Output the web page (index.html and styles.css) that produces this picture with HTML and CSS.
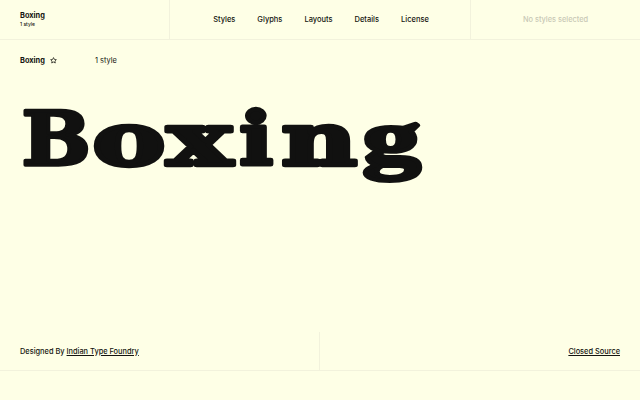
FILE: index.html
```html
<!DOCTYPE html>
<html lang="en">
<head>
<meta charset="utf-8">
<title>Boxing</title>
<link rel="stylesheet" href="styles.css">
</head>
<body>
<div class="page">
  <header class="topbar">
    <div class="brand">
      <div class="brand-name">Boxing</div>
      <div class="brand-sub">1 style</div>
    </div>
    <nav class="nav">
      <a>Styles</a><a>Glyphs</a><a>Layouts</a><a>Details</a><a>License</a>
    </nav>
    <div class="selection">No styles selected</div>
  </header>
  <main class="main">
    <div class="meta">
      <div class="meta-name">
        <strong>Boxing</strong>
        <svg class="star" viewBox="0 0 12 12" width="7" height="7"><path d="M6 1l1.500 3.200 3.400.4-2.500 2.300.7 3.400L6 8.600l-3.100 1.700.7-3.400L1.100 4.600l3.400-.4z" fill="none" stroke="#1a1a14" stroke-width="1.300" stroke-linejoin="round"/></svg>
      </div>
      <div class="meta-count">1 style</div>
    </div>
    <h1 class="specimen">
      <svg class="specimen-art" viewBox="0 0 440 120" width="440" height="120" role="img"><text class="glyph" transform="translate(21.500 84) scale(1.08 .98)">B</text><text class="glyph heavy" transform="translate(92.500 84) scale(1.44 .97)">o</text><text class="glyph heavy" transform="translate(167 84) scale(1.44 .97)">x</text><text class="glyph heavy" transform="translate(239.500 84) scale(1.16 .97)">i</text><text class="glyph heavy" transform="translate(281.500 84) scale(1.37 .97)">n</text><text class="glyph alt" transform="translate(362.500 83) scale(1.45 .98)">g</text></svg>
    </h1>
  </main>
  <footer class="footer">
    <div class="credit">Designed By <a>Indian Type Foundry</a></div>
    <div class="licence"><a>Closed Source</a></div>
  </footer>
  <div class="tail"></div>
</div>
</body>
</html>
```
FILE: styles.css
```css
* { box-sizing: border-box; }
html, body { margin: 0; height: 100%; }
body {
  background: #feffe6;
  color: #14140f;
  font-family: Inter, "Liberation Sans", sans-serif;
  font-size: 7.4px;
  font-weight: 500;
  overflow: hidden;
}
.page { height: 400px; display: flex; flex-direction: column; }
.topbar {
  height: 40px;
  display: grid;
  grid-template-columns: 170px 1fr 170px;
  border-bottom: 1px solid #f2f2dc;
}
.brand {
  padding-left: 20px;
  border-right: 1px solid #f2f2dc;
  display: flex;
  flex-direction: column;
  justify-content: center;
}
.brand-name { font-weight: 700; line-height: 10px; }
.brand-sub { font-size: 5px; line-height: 7px; }
.nav { display: flex; justify-content: center; align-items: center; gap: 22px; padding-left: 2px; font-size: 7.5px; }
.selection {
  border-left: 1px solid #f2f2dc;
  display: flex;
  align-items: center;
  justify-content: center;
  color: #c9c9b6;
}
.main { flex: 1; padding: 0 20px; }
.meta { display: flex; height: 41px; align-items: center; }
.meta-name { width: 75px; display: flex; align-items: center; gap: 5px; }
.meta-name strong { font-weight: 700; }
.meta-count { font-weight: 400; }
.star { display: block; }
.specimen { margin: 0; font-size: inherit; }
.specimen-art { display: block; margin-left: -20px; overflow: visible; }
.glyph {
  font-family: "DejaVu Serif", serif;
  font-weight: 700;
  font-size: 76px;
  fill: #111110;
  stroke: #111110;
  stroke-width: 3.5px;
  stroke-linejoin: round;
}
.glyph.heavy { stroke-width: 4.5px; }
.glyph.alt { font-family: "Liberation Serif", serif; font-size: 80px; stroke-width: 4px; }
.footer {
  height: 39px;
  display: grid;
  grid-template-columns: 1fr 1fr;
  border-bottom: 1px solid #f2f2dc;
}
.credit { padding-left: 20px; display: flex; align-items: center; gap: 2px; border-right: 1px solid #f2f2dc; }
.licence { padding-right: 20px; display: flex; align-items: center; justify-content: flex-end; }
.footer a { text-decoration: underline; text-underline-offset: 1px; }
.tail { height: 29px; }
```
